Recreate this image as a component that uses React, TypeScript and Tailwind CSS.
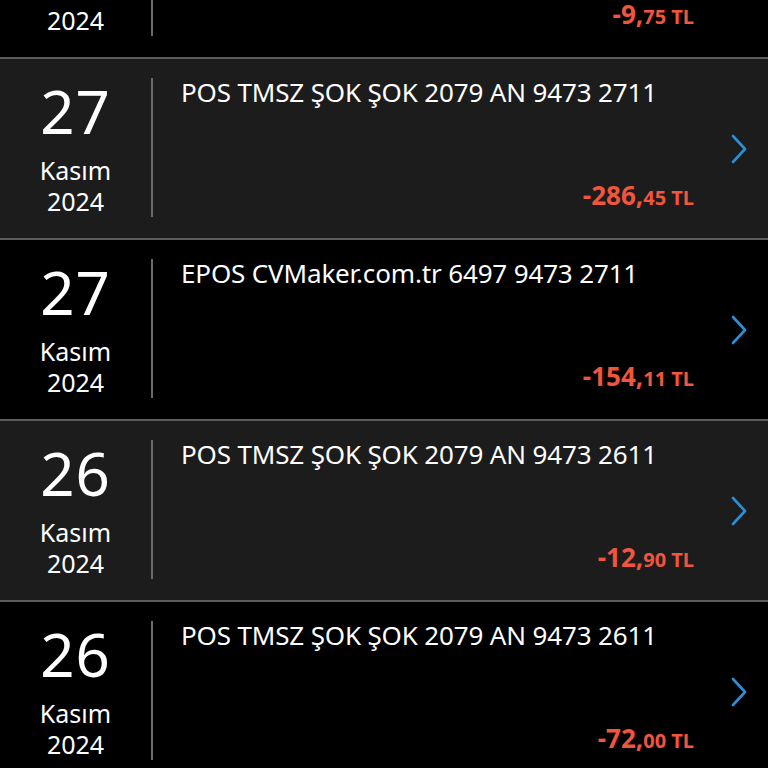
import React from "react";

type Tx = {
  day: string;
  month: string;
  year: string;
  desc: string;
  whole: string;
  cents: string;
};

const txs: Tx[] = [
  { day: "28", month: "Kasım", year: "2024", desc: "POS TMSZ ŞOK ŞOK 2079 AN 9473 2711", whole: "-9,", cents: "75" },
  { day: "27", month: "Kasım", year: "2024", desc: "POS TMSZ ŞOK ŞOK 2079 AN 9473 2711", whole: "-286,", cents: "45" },
  { day: "27", month: "Kasım", year: "2024", desc: "EPOS CVMaker.com.tr 6497 9473 2711", whole: "-154,", cents: "11" },
  { day: "26", month: "Kasım", year: "2024", desc: "POS TMSZ ŞOK ŞOK 2079 AN 9473 2611", whole: "-12,", cents: "90" },
  { day: "26", month: "Kasım", year: "2024", desc: "POS TMSZ ŞOK ŞOK 2079 AN 9473 2611", whole: "-72,", cents: "00" },
];

function Chevron() {
  return (
    <svg width="18" height="30" viewBox="0 0 18 30" fill="none">
      <path d="M3 2 L15 15 L3 28" stroke="#2b8fd8" strokeWidth="2.6" strokeLinecap="round" strokeLinejoin="round" />
    </svg>
  );
}

function Row({ tx, odd }: { tx: Tx; odd: boolean }) {
  return (
    <div className={`flex h-[181px] border-t-2 border-[#5c5c5c] ${odd ? "bg-[#1c1c1c]" : "bg-black"}`}>
      {/* date */}
      <div className="w-[151px] flex flex-col items-center pt-[22px] text-white">
        <div className="text-[60px] leading-[60px] tracking-[1px]">{tx.day}</div>
        <div className="text-[25px] leading-[31px] mt-[14px]">{tx.month}</div>
        <div className="text-[25px] leading-[31px]">{tx.year}</div>
      </div>
      <div className="w-[2px] h-[139px] mt-[19px] bg-[#6a6a6a]" />
      {/* details */}
      <div className="flex-1 flex flex-col justify-between pl-[28px] pt-[18px] pb-[24px]">
        <div className="text-white text-[26px] leading-[30px] tracking-[-0.15px] whitespace-nowrap">{tx.desc}</div>
        <div className="text-right text-[#f0553e] font-bold leading-[30px]">
          <span className="text-[26px]">{tx.whole}</span>
          <span className="text-[20px]">{tx.cents} TL</span>
        </div>
      </div>
      <div className="w-[74px] flex items-center pl-[36px]">
        <Chevron />
      </div>
    </div>
  );
}

export default function App() {
  return (
    <div className="w-[768px] h-[768px] overflow-hidden bg-black" style={{ fontFamily: '"Noto Sans", "Open Sans", sans-serif' }}>
      <div className="-mt-[124px]">
        {txs.map((tx, i) => (
          <Row key={i} tx={tx} odd={i % 2 === 1} />
        ))}
      </div>
    </div>
  );
}
